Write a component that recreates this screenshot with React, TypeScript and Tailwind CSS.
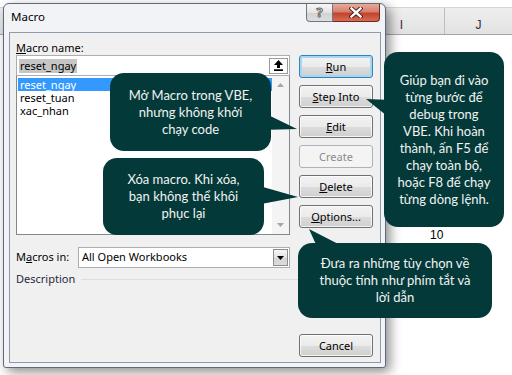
import React from "react";

/**
 * Macro dialog (Excel, Windows 7 look) with explanatory callouts on top
 */

function U({ children }: { children: React.ReactNode }) {
  return <span className="underline decoration-1 underline-offset-[1px]">{children}</span>;
}

function WinButton({
  children,
  focused = false,
  disabled = false,
}: {
  children: React.ReactNode;
  focused?: boolean;
  disabled?: boolean;
}) {
  if (disabled) {
    return (
      <div className="flex h-[23px] w-[74px] items-center justify-center rounded-[3px] border border-[#adb2b5] bg-[#f4f4f4] text-[11px] leading-none text-[#8a8a8a]">
        {children}
      </div>
    );
  }
  return (
    <div
      className={
        focused
          ? "flex h-[23px] w-[74px] items-center justify-center rounded-[3px] border border-[#3c7fb1] bg-[linear-gradient(to_bottom,#f2f2f2_0%,#ebebeb_50%,#dddddd_51%,#cfcfcf_100%)] text-[11px] leading-none text-black shadow-[inset_0_0_0_2px_#9fd9f6]"
          : "flex h-[23px] w-[74px] items-center justify-center rounded-[3px] border border-[#707070] bg-[linear-gradient(to_bottom,#f2f2f2_0%,#ebebeb_50%,#dddddd_51%,#cfcfcf_100%)] text-[11px] leading-none text-black shadow-[inset_0_0_0_1px_rgba(255,255,255,0.75)]"
      }
    >
      {children}
    </div>
  );
}

function Callout({ className, lines }: { className: string; lines: string[] }) {
  return (
    <div
      className={`absolute flex flex-col items-center justify-center rounded-[14px] bg-[#033a39] text-center font-['Lato',sans-serif] text-[13px] leading-[17px] text-[#f2f2f2] ${className}`}
    >
      {lines.map((l) => (
        <span key={l}>{l}</span>
      ))}
    </div>
  );
}

export default function App() {
  return (
    <div className="relative h-[375px] w-[512px] overflow-hidden bg-white font-['Noto_Sans',sans-serif]">
      {/* Spreadsheet behind the dialog */}
      <div className="h-[7px] bg-white" />
      <div className="flex h-[28px] border-y border-b-[#a5a5a5] border-t-[#d6d6d6] bg-[linear-gradient(to_bottom,#eeeeee,#e2e2e2)] font-['Liberation_Sans',sans-serif] text-[12px] leading-[14px] text-[#3a2a40]">
        <div className="w-[359px]" />
        <div className="flex w-[86px] items-end justify-center border-r border-[#bdbdbd] pb-[2px]">I</div>
        <div className="flex flex-1 items-end justify-center pb-[2px]">J</div>
      </div>
      <span className="absolute left-[430px] top-[228px] font-['Liberation_Sans',sans-serif] text-[12px] leading-[14px] text-black">
        10
      </span>

      {/* Dialog window */}
      <div className="absolute left-[3px] top-[3px] flex h-[365px] w-[383px] flex-col rounded-t-[6px] rounded-b-[3px] border border-[#5f6a78] bg-[#f1f3f6] shadow-[4px_4px_12px_rgba(0,0,0,0.45)]">
        {/* Title bar */}
        <div className="flex h-[28px] items-start justify-between">
          <span className="pl-[7px] pt-[5px] text-[11.5px] leading-[16px] text-black">Macro</span>
          <div className="mr-[5px] flex">
            <div className="flex h-[18px] w-[27px] items-center justify-center rounded-bl-[4px] border border-t-0 border-[#6f7781] bg-[linear-gradient(to_bottom,#f7f7f7,#e4e4e4_50%,#d2d2d2_51%,#dedede)] text-[13px] font-bold leading-none text-white [-webkit-text-stroke:1px_#6a6a6a]">
              ?
            </div>
            <div className="flex h-[18px] w-[47px] items-center justify-center rounded-br-[4px] border border-l-0 border-t-0 border-[#6e2a22] bg-[linear-gradient(to_bottom,#e9a99b,#d7806e_45%,#c3442e_55%,#d76b52)]">
              <svg width="14" height="11" viewBox="0 0 14 11">
                <path d="M2.5 1.5 L11.5 9.5 M11.5 1.5 L2.5 9.5" stroke="#3d1510" strokeWidth="4.2" strokeLinecap="square" />
                <path d="M2.5 1.5 L11.5 9.5 M11.5 1.5 L2.5 9.5" stroke="#ffffff" strokeWidth="2.4" strokeLinecap="square" />
              </svg>
            </div>
          </div>
        </div>

        {/* Client area */}
        <div className="mb-[4px] ml-[5px] mr-[4px] flex flex-1 flex-col border border-[#8e9aa8] bg-[#f0f0f0] pb-[5px] pl-[6px] pr-[7px] text-[11px] text-black">
          <div className="flex items-start gap-[9px]">
            {/* Left column */}
            <div className="flex w-[274px] flex-col pt-[7px]">
              <span className="h-[15px] leading-[15px]">
                <U>M</U>acro name:
              </span>
              <div className="flex h-[21px] items-center border border-[#abadb3] bg-white pl-[2px] pr-[1px]">
                <span className="bg-[#c6c6c6] px-[1px] leading-[14px]">reset_ngay</span>
                <div className="ml-auto flex h-[16px] w-[19px] items-center justify-center border border-[#9a9a9a] bg-white">
                  <svg width="9" height="11" viewBox="0 0 9 11">
                    <polygon points="4.5,0 9,5 6,5 6,8 3,8 3,5 0,5" fill="#000" />
                    <rect x="0" y="9.3" width="9" height="1.7" fill="#000" />
                  </svg>
                </div>
              </div>
              <div className="flex h-[159px] border border-t-0 border-[#828790] bg-white">
                <div className="flex flex-1 flex-col pl-[1px] pt-[2px]">
                  <span className="h-[13px] bg-[#3399ff] pl-[2px] leading-[13px] text-white">reset_ngay</span>
                  <span className="h-[13px] pl-[2px] leading-[13px]">reset_tuan</span>
                  <span className="h-[13px] pl-[2px] leading-[13px]">xac_nhan</span>
                </div>
                <div className="flex w-[17px] flex-col items-center justify-between bg-[#f4f4f4] py-[7px]">
                  <svg width="7" height="4" viewBox="0 0 7 4">
                    <polygon points="3.5,0 7,4 0,4" fill="#a6a6a6" />
                  </svg>
                  <svg width="7" height="4" viewBox="0 0 7 4">
                    <polygon points="0,0 7,0 3.5,4" fill="#a6a6a6" />
                  </svg>
                </div>
              </div>
              <div className="mt-[12px] flex h-[21px] items-center">
                <span className="w-[62px]">
                  M<U>a</U>cros in:
                </span>
                <div className="flex h-[21px] flex-1 items-center border border-[#abadb3] bg-white pl-[3px] pr-[1px]">
                  <span>All Open Workbooks</span>
                  <div className="ml-auto flex h-[17px] w-[15px] items-center justify-center border border-[#8c8c8c] bg-[linear-gradient(to_bottom,#f6f6f6,#e3e3e3_50%,#d4d4d4_51%,#dcdcdc)]">
                    <svg width="7" height="4" viewBox="0 0 7 4">
                      <polygon points="0,0 7,0 3.5,4" fill="#000" />
                    </svg>
                  </div>
                </div>
              </div>
            </div>

            {/* Buttons */}
            <div className="flex flex-col gap-[7px] pt-[22px]">
              <WinButton focused>
                <U>R</U>un
              </WinButton>
              <WinButton>
                <U>S</U>tep Into
              </WinButton>
              <WinButton>
                <U>E</U>dit
              </WinButton>
              <WinButton disabled>Create</WinButton>
              <WinButton>
                <U>D</U>elete
              </WinButton>
              <WinButton>
                <U>O</U>ptions...
              </WinButton>
            </div>
          </div>

          <div className="mt-[3px] flex h-[16px] items-center text-[#1e2a3c]">
            <span>Description</span>
            <div className="ml-[6px] h-px flex-1 bg-[#d5dfe5]" />
          </div>

          <div className="flex-1" />
          <div className="flex justify-end">
            <WinButton>Cancel</WinButton>
          </div>
        </div>
      </div>

      {/* Callouts */}
      <svg className="pointer-events-none absolute left-0 top-0" width="512" height="375" viewBox="0 0 512 375">
        <polygon points="262,112 297,129 262,130" fill="#033a39" />
        <polygon points="256,185 298,197 256,205" fill="#033a39" />
        <polygon points="366,99 392,100 392,120" fill="#033a39" />
        <polygon points="309,229 318,249 348,249" fill="#033a39" />
      </svg>
      <Callout
        className="left-[110px] top-[73px] h-[78px] w-[161px]"
        lines={["Mở Macro trong VBE,", "nhưng không khởi", "chạy code"]}
      />
      <Callout
        className="left-[103px] top-[158px] h-[77px] w-[161px]"
        lines={["Xóa macro. Khi xóa,", "bạn không thể khôi", "phục lại"]}
      />
      <Callout
        className="left-[384px] top-[52px] h-[175px] w-[120px]"
        lines={[
          "Giúp bạn đi vào",
          "từng bước để",
          "debug trong",
          "VBE. Khi hoàn",
          "thành, ấn F5 để",
          "chạy toàn bộ,",
          "hoặc F8 để chạy",
          "từng dòng lệnh.",
        ]}
      />
      <Callout
        className="left-[298px] top-[243px] h-[75px] w-[194px]"
        lines={["Đưa ra những tùy chọn về", "thuộc tính như phím tắt và", "lời dẫn"]}
      />
    </div>
  );
}
